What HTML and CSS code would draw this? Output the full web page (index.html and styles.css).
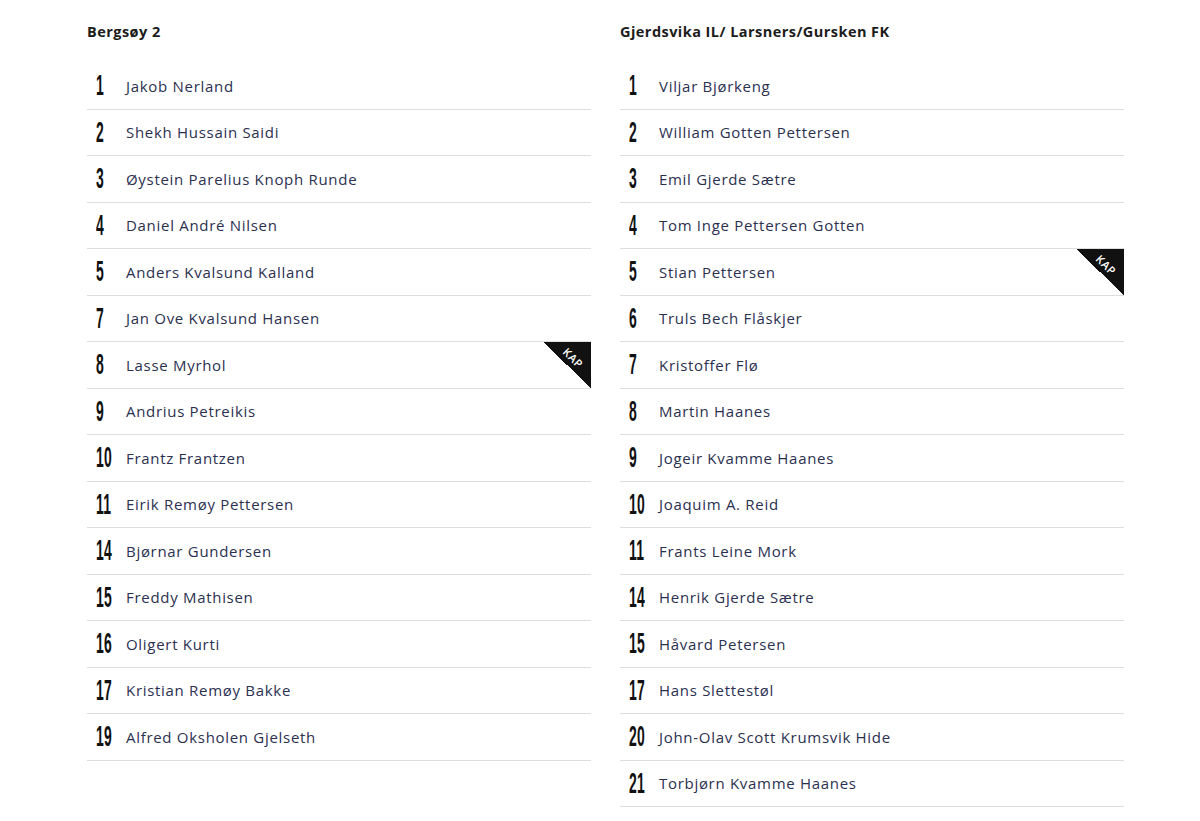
FILE: index.html
```html
<!DOCTYPE html>
<html>
<head>
<meta charset="utf-8">
<link rel="stylesheet" href="styles.css">
</head>
<body>
<div class="page">
  <section class="team">
    <h2 class="team-name">Bergsøy 2</h2>
    <ul class="roster">
      <li class="row"><span class="num">1</span><span class="name">Jakob Nerland</span></li>
      <li class="row"><span class="num">2</span><span class="name">Shekh Hussain Saidi</span></li>
      <li class="row"><span class="num">3</span><span class="name">Øystein Parelius Knoph Runde</span></li>
      <li class="row"><span class="num">4</span><span class="name">Daniel André Nilsen</span></li>
      <li class="row"><span class="num">5</span><span class="name">Anders Kvalsund Kalland</span></li>
      <li class="row"><span class="num">7</span><span class="name">Jan Ove Kvalsund Hansen</span></li>
      <li class="row"><span class="num">8</span><span class="name">Lasse Myrhol</span><span class="kap"><span class="kap-text">KAP</span></span></li>
      <li class="row"><span class="num">9</span><span class="name">Andrius Petreikis</span></li>
      <li class="row"><span class="num">10</span><span class="name">Frantz Frantzen</span></li>
      <li class="row"><span class="num">11</span><span class="name">Eirik Remøy Pettersen</span></li>
      <li class="row"><span class="num">14</span><span class="name">Bjørnar Gundersen</span></li>
      <li class="row"><span class="num">15</span><span class="name">Freddy Mathisen</span></li>
      <li class="row"><span class="num">16</span><span class="name">Oligert Kurti</span></li>
      <li class="row"><span class="num">17</span><span class="name">Kristian Remøy Bakke</span></li>
      <li class="row"><span class="num">19</span><span class="name">Alfred Oksholen Gjelseth</span></li>
    </ul>
  </section>
  <section class="team">
    <h2 class="team-name">Gjerdsvika IL/ Larsners/Gursken FK</h2>
    <ul class="roster">
      <li class="row"><span class="num">1</span><span class="name">Viljar Bjørkeng</span></li>
      <li class="row"><span class="num">2</span><span class="name">William Gotten Pettersen</span></li>
      <li class="row"><span class="num">3</span><span class="name">Emil Gjerde Sætre</span></li>
      <li class="row"><span class="num">4</span><span class="name">Tom Inge Pettersen Gotten</span></li>
      <li class="row"><span class="num">5</span><span class="name">Stian Pettersen</span><span class="kap"><span class="kap-text">KAP</span></span></li>
      <li class="row"><span class="num">6</span><span class="name">Truls Bech Flåskjer</span></li>
      <li class="row"><span class="num">7</span><span class="name">Kristoffer Flø</span></li>
      <li class="row"><span class="num">8</span><span class="name">Martin Haanes</span></li>
      <li class="row"><span class="num">9</span><span class="name">Jogeir Kvamme Haanes</span></li>
      <li class="row"><span class="num">10</span><span class="name">Joaquim A. Reid</span></li>
      <li class="row"><span class="num">11</span><span class="name">Frants Leine Mork</span></li>
      <li class="row"><span class="num">14</span><span class="name">Henrik Gjerde Sætre</span></li>
      <li class="row"><span class="num">15</span><span class="name">Håvard Petersen</span></li>
      <li class="row"><span class="num">17</span><span class="name">Hans Slettestøl</span></li>
      <li class="row"><span class="num">20</span><span class="name">John-Olav Scott Krumsvik Hide</span></li>
      <li class="row"><span class="num">21</span><span class="name">Torbjørn Kvamme Haanes</span></li>
    </ul>
  </section>
</div>
</body>
</html>
```

FILE: styles.css
```css
html, body {
  margin: 0;
  padding: 0;
  background: #ffffff;
}

.page {
  display: flex;
  gap: 29px;
  padding: 23px 0 0 87px;
}

.team {
  width: 504px;
}

.team-name {
  margin: 0;
  height: 40px;
  font-family: "Open Sans", "Liberation Sans", sans-serif;
  font-size: 14.5px;
  font-weight: 700;
  color: #1c1c1c;
  line-height: 18px;
  letter-spacing: 0.45px;
}

.roster {
  list-style: none;
  margin: 0;
  padding: 0;
}

.row {
  position: relative;
  display: flex;
  align-items: center;
  height: 45.5px;
  border-bottom: 1px solid #dedede;
  overflow: hidden;
}

.num {
  width: 39px;
  padding-left: 9px;
  box-sizing: border-box;
  flex-shrink: 0;
  font-family: "Liberation Sans", sans-serif;
  font-weight: 700;
  font-size: 29px;
  line-height: 1;
  color: #111;
  display: inline-block;
  transform: scaleX(0.48);
  transform-origin: 9px 50%;
  letter-spacing: 0.5px;
}

.name {
  font-family: "Open Sans", "Liberation Sans", sans-serif;
  font-size: 15px;
  color: #2b3050;
  letter-spacing: 0.7px;
}

.kap {
  position: absolute;
  top: 0;
  right: 0;
  width: 48px;
  height: 46px;
  background: linear-gradient(to bottom left, #111 50%, transparent 50%);
}

.kap-text {
  position: absolute;
  top: 10px;
  left: 17px;
  width: 26px;
  text-align: center;
  transform: rotate(45deg);
  font-family: "Open Sans", "Liberation Sans", sans-serif;
  font-size: 11px;
  font-weight: 600;
  color: #ffffff;
  letter-spacing: 0.6px;
  line-height: 12px;
}
```
